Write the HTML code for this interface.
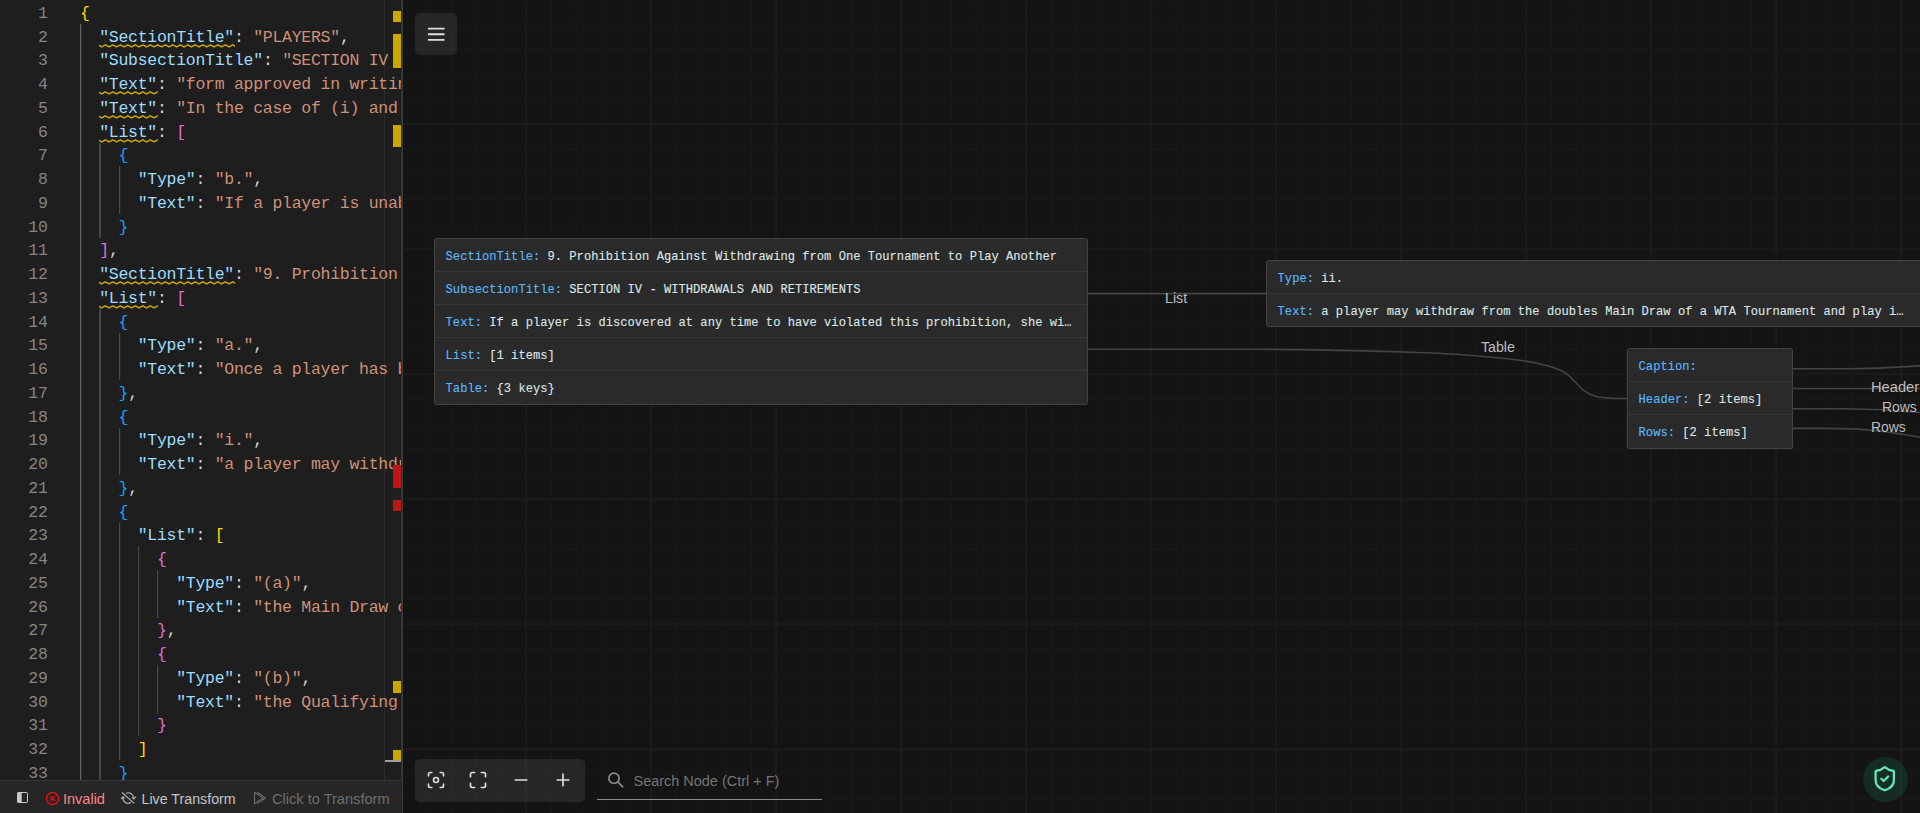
<!DOCTYPE html>
<html><head><meta charset="utf-8"><title>JSON Crack</title>
<style>
html,body{margin:0;padding:0;background:#141414;overflow:hidden}
body{width:1920px;height:813px;position:relative;font-family:"Liberation Sans",sans-serif}
#ed{position:absolute;left:0;top:0;width:402px;height:781px;background:#1e1e1e;overflow:hidden}
.ln,.cl{position:absolute;height:23.75px;line-height:23.75px;font-family:"Liberation Mono",monospace;font-size:16.5px;letter-spacing:-0.277px;white-space:pre;padding-top:2px}
.ln{left:0;width:47.6px;text-align:right;color:#858585}
.cl{left:80px;color:#d4d4d4}
.k{color:#9cdcfe}.s{color:#ce9178}.p{color:#d4d4d4}
.b1{color:#ffd700}.b2{color:#da70d6}.b3{color:#179fff}
.g1,.g2,.g3,.g4,.g5{position:absolute;width:1px}
.g1{background:#646464;box-shadow:1px 0 0 #2c2c2c}.g2{background:#454545;width:2px}.g3{background:#4a4a4a;box-shadow:1px 0 0 #262626}.g4{background:#444;box-shadow:1px 0 0 #242424}.g5{background:#484848;box-shadow:1px 0 0 #282828}
.sqg{position:absolute;overflow:hidden}
#rul{position:absolute;left:384px;top:0;width:1px;height:781px;background:#2b2b2b}
.my,.mr{position:absolute;left:393px;width:8px}
.my{background:#cca700}.mr{background:#bc1616}
#cur{position:absolute;left:385px;top:760px;width:16px;height:2px;background:#a0a0a0}
#sb{position:absolute;left:0;top:780px;width:402px;height:33px;background:#262626;border-top:1px solid #36383e;box-sizing:border-box;font-size:15px;line-height:18px}
#sb span{position:absolute;top:8.9px;white-space:pre}
#sb svg{position:absolute}
#sep{position:absolute;left:402px;top:0;width:1px;height:813px;background:#3a3a3a}
#sep2{position:absolute;left:401px;top:0;width:1px;height:780px;background:#303238}
#gr{position:absolute;left:402px;top:0;width:1518px;height:813px;overflow:hidden;background-color:#141414;
background-image:linear-gradient(#1c1b1b 1.875px,transparent 1.875px),linear-gradient(90deg,#1c1b1b 1.875px,transparent 1.875px),linear-gradient(#191919 1.25px,transparent 1.25px),linear-gradient(90deg,#191919 1.25px,transparent 1.25px);
background-position:-1.875px -1.875px,-1.875px -1.875px,-1.25px -1.25px,-1.25px -1.25px;
background-size:125px 125px,125px 125px,25px 25px,25px 25px}
.node{position:absolute;background:#2a2a2a;border:1px solid #424242;border-radius:2.5px;box-sizing:border-box;font-family:"Liberation Mono",monospace;font-size:12.1px;letter-spacing:0.021px;color:#dce5e7;overflow:hidden}
.row{height:33px;line-height:33px;box-sizing:border-box;border-bottom:1px solid #383838;padding-left:10.6px;white-space:pre;padding-top:2px;-webkit-text-stroke:0.12px}
.row:last-child{border-bottom:none}
.row b{font-weight:normal;color:#59b8ff}
#edges{position:absolute;left:0;top:0}
.el{position:absolute;font-size:14.2px;line-height:16px;color:#bdbdbd;white-space:pre}
.btn{position:absolute;background:rgba(225,228,240,0.085);border-radius:5px}
#tb{left:13px;top:759px;width:170px;height:43px}
#hb{left:13px;top:13px;width:42px;height:42px}
#srch{position:absolute;left:195px;top:798.75px;width:225px;height:1.25px;background:#8c8c8c}
#stx{position:absolute;left:231.5px;top:772px;font-size:14.46px;line-height:18px;color:#747474;white-space:pre}
#shield{position:absolute;left:1461px;top:757px;width:45px;height:45px;border-radius:50%;background:rgba(18,184,134,0.15)}
</style></head><body>
<div id="ed">
<div id="rul"></div>
<div class="g1" style="left:80px;top:23.75px;height:783.75px"></div><div class="g2" style="left:99px;top:142.50px;height:95.00px"></div><div class="g2" style="left:99px;top:308.75px;height:498.75px"></div><div class="g3" style="left:119px;top:166.25px;height:47.50px"></div><div class="g3" style="left:119px;top:332.50px;height:47.50px"></div><div class="g3" style="left:119px;top:427.50px;height:47.50px"></div><div class="g3" style="left:119px;top:522.50px;height:237.50px"></div><div class="g4" style="left:138px;top:546.25px;height:190.00px"></div><div class="g5" style="left:157px;top:570.00px;height:47.50px"></div><div class="g5" style="left:157px;top:665.00px;height:47.50px"></div>
<div class="ln" style="top:-0.01px">1</div>
<div class="cl" style="top:-0.01px"><span class="b1">{</span></div>
<div class="ln" style="top:23.74px">2</div>
<div class="cl" style="top:23.74px">  <span class="k sq">"SectionTitle"</span><span class="p">: </span><span class="s">"PLAYERS"</span><span class="p">,</span></div>
<div class="ln" style="top:47.49px">3</div>
<div class="cl" style="top:47.49px">  <span class="k">"SubsectionTitle"</span><span class="p">: </span><span class="s">"SECTION IV - WITHDRAWALS AND RETIREMENTS",</span></div>
<div class="ln" style="top:71.24px">4</div>
<div class="cl" style="top:71.24px">  <span class="k sq">"Text"</span><span class="p">: </span><span class="s">"form approved in writing by the WTA</span></div>
<div class="ln" style="top:94.99px">5</div>
<div class="cl" style="top:94.99px">  <span class="k sq">"Text"</span><span class="p">: </span><span class="s">"In the case of (i) and (ii) above</span></div>
<div class="ln" style="top:118.74px">6</div>
<div class="cl" style="top:118.74px">  <span class="k sq">"List"</span><span class="p">: </span><span class="b2">[</span></div>
<div class="ln" style="top:142.49px">7</div>
<div class="cl" style="top:142.49px">    <span class="b3">{</span></div>
<div class="ln" style="top:166.24px">8</div>
<div class="cl" style="top:166.24px">      <span class="k">"Type"</span><span class="p">: </span><span class="s">"b."</span><span class="p">,</span></div>
<div class="ln" style="top:189.99px">9</div>
<div class="cl" style="top:189.99px">      <span class="k">"Text"</span><span class="p">: </span><span class="s">"If a player is unable to</span></div>
<div class="ln" style="top:213.74px">10</div>
<div class="cl" style="top:213.74px">    <span class="b3">}</span></div>
<div class="ln" style="top:237.49px">11</div>
<div class="cl" style="top:237.49px">  <span class="b2">]</span><span class="p">,</span></div>
<div class="ln" style="top:261.24px">12</div>
<div class="cl" style="top:261.24px">  <span class="k sq">"SectionTitle"</span><span class="p">: </span><span class="s">"9. Prohibition Against</span></div>
<div class="ln" style="top:284.99px">13</div>
<div class="cl" style="top:284.99px">  <span class="k sq">"List"</span><span class="p">: </span><span class="b2">[</span></div>
<div class="ln" style="top:308.74px">14</div>
<div class="cl" style="top:308.74px">    <span class="b3">{</span></div>
<div class="ln" style="top:332.49px">15</div>
<div class="cl" style="top:332.49px">      <span class="k">"Type"</span><span class="p">: </span><span class="s">"a."</span><span class="p">,</span></div>
<div class="ln" style="top:356.24px">16</div>
<div class="cl" style="top:356.24px">      <span class="k">"Text"</span><span class="p">: </span><span class="s">"Once a player has been</span></div>
<div class="ln" style="top:379.99px">17</div>
<div class="cl" style="top:379.99px">    <span class="b3">}</span><span class="p">,</span></div>
<div class="ln" style="top:403.74px">18</div>
<div class="cl" style="top:403.74px">    <span class="b3">{</span></div>
<div class="ln" style="top:427.49px">19</div>
<div class="cl" style="top:427.49px">      <span class="k">"Type"</span><span class="p">: </span><span class="s">"i."</span><span class="p">,</span></div>
<div class="ln" style="top:451.24px">20</div>
<div class="cl" style="top:451.24px">      <span class="k">"Text"</span><span class="p">: </span><span class="s">"a player may withdraw</span></div>
<div class="ln" style="top:474.99px">21</div>
<div class="cl" style="top:474.99px">    <span class="b3">}</span><span class="p">,</span></div>
<div class="ln" style="top:498.74px">22</div>
<div class="cl" style="top:498.74px">    <span class="b3">{</span></div>
<div class="ln" style="top:522.49px">23</div>
<div class="cl" style="top:522.49px">      <span class="k">"List"</span><span class="p">: </span><span class="b1">[</span></div>
<div class="ln" style="top:546.24px">24</div>
<div class="cl" style="top:546.24px">        <span class="b2">{</span></div>
<div class="ln" style="top:569.99px">25</div>
<div class="cl" style="top:569.99px">          <span class="k">"Type"</span><span class="p">: </span><span class="s">"(a)"</span><span class="p">,</span></div>
<div class="ln" style="top:593.74px">26</div>
<div class="cl" style="top:593.74px">          <span class="k">"Text"</span><span class="p">: </span><span class="s">"the Main Draw of a</span></div>
<div class="ln" style="top:617.49px">27</div>
<div class="cl" style="top:617.49px">        <span class="b2">}</span><span class="p">,</span></div>
<div class="ln" style="top:641.24px">28</div>
<div class="cl" style="top:641.24px">        <span class="b2">{</span></div>
<div class="ln" style="top:664.99px">29</div>
<div class="cl" style="top:664.99px">          <span class="k">"Type"</span><span class="p">: </span><span class="s">"(b)"</span><span class="p">,</span></div>
<div class="ln" style="top:688.74px">30</div>
<div class="cl" style="top:688.74px">          <span class="k">"Text"</span><span class="p">: </span><span class="s">"the Qualifying of</span></div>
<div class="ln" style="top:712.49px">31</div>
<div class="cl" style="top:712.49px">        <span class="b2">}</span></div>
<div class="ln" style="top:736.24px">32</div>
<div class="cl" style="top:736.24px">      <span class="b1">]</span></div>
<div class="ln" style="top:759.99px">33</div>
<div class="cl" style="top:759.99px">    <span class="b3">}</span></div>
<svg class="sqg" style="left:99.25px;top:43.75px;width:135.95px;height:3.75px" viewBox="99.25 43.75 135.95 3.75"><path d="M98.05 44.55 L101.80 46.70 L105.55 44.55 L109.30 46.70 L113.05 44.55 L116.80 46.70 L120.55 44.55 L124.30 46.70 L128.05 44.55 L131.80 46.70 L135.55 44.55 L139.30 46.70 L143.05 44.55 L146.80 46.70 L150.55 44.55 L154.30 46.70 L158.05 44.55 L161.80 46.70 L165.55 44.55 L169.30 46.70 L173.05 44.55 L176.80 46.70 L180.55 44.55 L184.30 46.70 L188.05 44.55 L191.80 46.70 L195.55 44.55 L199.30 46.70 L203.05 44.55 L206.80 46.70 L210.55 44.55 L214.30 46.70 L218.05 44.55 L221.80 46.70 L225.55 44.55 L229.30 46.70 L233.05 44.55 L236.80 46.70 L240.55 44.55" fill="none" stroke="#cca700" stroke-width="1.5" stroke-linejoin="round"/></svg><svg class="sqg" style="left:99.25px;top:91.25px;width:58.95px;height:3.75px" viewBox="99.25 91.25 58.95 3.75"><path d="M98.05 92.05 L101.80 94.20 L105.55 92.05 L109.30 94.20 L113.05 92.05 L116.80 94.20 L120.55 92.05 L124.30 94.20 L128.05 92.05 L131.80 94.20 L135.55 92.05 L139.30 94.20 L143.05 92.05 L146.80 94.20 L150.55 92.05 L154.30 94.20 L158.05 92.05 L161.80 94.20 L165.55 92.05" fill="none" stroke="#cca700" stroke-width="1.5" stroke-linejoin="round"/></svg><svg class="sqg" style="left:99.25px;top:115.00px;width:58.95px;height:3.75px" viewBox="99.25 115.00 58.95 3.75"><path d="M98.05 115.80 L101.80 117.95 L105.55 115.80 L109.30 117.95 L113.05 115.80 L116.80 117.95 L120.55 115.80 L124.30 117.95 L128.05 115.80 L131.80 117.95 L135.55 115.80 L139.30 117.95 L143.05 115.80 L146.80 117.95 L150.55 115.80 L154.30 117.95 L158.05 115.80 L161.80 117.95 L165.55 115.80" fill="none" stroke="#cca700" stroke-width="1.5" stroke-linejoin="round"/></svg><svg class="sqg" style="left:99.25px;top:138.75px;width:58.95px;height:3.75px" viewBox="99.25 138.75 58.95 3.75"><path d="M98.05 139.55 L101.80 141.70 L105.55 139.55 L109.30 141.70 L113.05 139.55 L116.80 141.70 L120.55 139.55 L124.30 141.70 L128.05 139.55 L131.80 141.70 L135.55 139.55 L139.30 141.70 L143.05 139.55 L146.80 141.70 L150.55 139.55 L154.30 141.70 L158.05 139.55 L161.80 141.70 L165.55 139.55" fill="none" stroke="#cca700" stroke-width="1.5" stroke-linejoin="round"/></svg><svg class="sqg" style="left:99.25px;top:281.25px;width:135.95px;height:3.75px" viewBox="99.25 281.25 135.95 3.75"><path d="M98.05 282.05 L101.80 284.20 L105.55 282.05 L109.30 284.20 L113.05 282.05 L116.80 284.20 L120.55 282.05 L124.30 284.20 L128.05 282.05 L131.80 284.20 L135.55 282.05 L139.30 284.20 L143.05 282.05 L146.80 284.20 L150.55 282.05 L154.30 284.20 L158.05 282.05 L161.80 284.20 L165.55 282.05 L169.30 284.20 L173.05 282.05 L176.80 284.20 L180.55 282.05 L184.30 284.20 L188.05 282.05 L191.80 284.20 L195.55 282.05 L199.30 284.20 L203.05 282.05 L206.80 284.20 L210.55 282.05 L214.30 284.20 L218.05 282.05 L221.80 284.20 L225.55 282.05 L229.30 284.20 L233.05 282.05 L236.80 284.20 L240.55 282.05" fill="none" stroke="#cca700" stroke-width="1.5" stroke-linejoin="round"/></svg><svg class="sqg" style="left:99.25px;top:305.00px;width:58.95px;height:3.75px" viewBox="99.25 305.00 58.95 3.75"><path d="M98.05 305.80 L101.80 307.95 L105.55 305.80 L109.30 307.95 L113.05 305.80 L116.80 307.95 L120.55 305.80 L124.30 307.95 L128.05 305.80 L131.80 307.95 L135.55 305.80 L139.30 307.95 L143.05 305.80 L146.80 307.95 L150.55 305.80 L154.30 307.95 L158.05 305.80 L161.80 307.95 L165.55 305.80" fill="none" stroke="#cca700" stroke-width="1.5" stroke-linejoin="round"/></svg>
<div class="my" style="top:11px;height:11px"></div><div class="my" style="top:34px;height:34px"></div><div class="my" style="top:125px;height:22px"></div><div class="mr" style="top:465px;height:23px"></div><div class="mr" style="top:500px;height:11px"></div><div class="my" style="top:681px;height:12px"></div><div class="my" style="top:750px;height:10px"></div>
<div id="cur"></div>
</div>
<div id="sb">
<svg style="left:17px;top:11px" width="11" height="11" viewBox="0 0 11 11"><rect x="0.5" y="0.5" width="10" height="10" rx="0.8" fill="none" stroke="#c9c9cd" stroke-width="1"/><rect x="0.5" y="0.5" width="4.2" height="10" fill="#c9c9cd"/></svg>
<svg style="left:45px;top:10px" width="15" height="15" viewBox="0 0 15 15"><circle cx="7.5" cy="7.5" r="6.1" fill="none" stroke="#f20d0d" stroke-width="1.3"/><path d="M5.2 5.2l4.6 4.6M9.8 5.2l-4.6 4.6" stroke="#f20d0d" stroke-width="1.3" fill="none"/></svg>
<span style="left:63px;color:#ff8787;font-size:14.5px">Invalid</span>
<svg style="left:118px;top:6.6px" width="20" height="20" viewBox="0 0 20 20" fill="none" stroke="#b8b8ba" stroke-width="1.1"><path d="M8.1 5.3A5.2 5.2 0 0 1 15.5 9.6"/><path d="M14.2 9.5L15.8 10.9L17.8 8.7"/><path d="M5 9.3A5.2 5.2 0 0 0 12.9 14.5"/><path d="M3.2 10.9L5 8.8L6.6 10.3"/><path d="M4.1 4.5L16.1 15.4"/></svg>
<span style="left:141.5px;color:#c4c4c6;font-size:14.25px">Live Transform</span>
<svg style="left:250px;top:6.6px" width="20" height="20" viewBox="0 0 20 20" fill="none" stroke="#6e6e6e" stroke-width="1.05" stroke-linejoin="miter"><path d="M4.5 4.3L13.2 9.9L4.5 15.5z"/><path d="M7.3 4.2L15.5 9.9L7.3 15.6"/></svg>
<span style="left:272px;color:#6e6e6e;font-size:14.6px">Click to Transform</span>
</div>
<div id="gr">
<svg id="edges" width="1518" height="813" viewBox="402 0 1518 813" fill="none" stroke="#444444" stroke-width="1.6">
<path d="M1088 293.6H1267"/>
<path d="M1088.0 349.2 C1115.8 349.2 1212.6 349.1 1255.0 349.3 C1297.4 349.5 1318.2 350.0 1342.5 350.4 C1366.8 350.8 1381.3 351.2 1400.8 351.9 C1420.2 352.6 1439.8 353.1 1459.2 354.5 C1478.7 355.9 1502.9 358.1 1517.5 360.0 C1532.1 361.9 1538.9 363.6 1546.7 365.6 C1554.5 367.7 1559.4 369.5 1564.2 372.3 C1569.0 375.1 1572.4 379.3 1575.8 382.5 C1579.2 385.7 1581.2 388.9 1584.6 391.2 C1588.0 393.6 1591.3 395.3 1596.2 396.5 C1601.1 397.7 1608.4 398.1 1613.7 398.4 C1619.0 398.7 1625.6 398.5 1628.0 398.5"/>
<path d="M1793 368.8H1845C1875 368.8 1895 367.4 1921 365.7"/>
<path d="M1793 388.5H1920"/>
<path d="M1793 408.8H1845C1875 408.8 1895 410 1921 412.6"/>
<path d="M1793 428.4H1825C1865 428.4 1890 431.5 1921 437.5"/>
</svg>
<div class="node" style="left:32px;top:238px;width:654px;height:167px">
<div class="row"><b>SectionTitle:</b> 9. Prohibition Against Withdrawing from One Tournament to Play Another</div>
<div class="row"><b>SubsectionTitle:</b> SECTION IV - WITHDRAWALS AND RETIREMENTS</div>
<div class="row"><b>Text:</b> If a player is discovered at any time to have violated this prohibition, she wi…</div>
<div class="row"><b>List:</b> [1 items]</div>
<div class="row"><b>Table:</b> {3 keys}</div>
</div>
<div class="node" style="left:864px;top:260px;width:700px;height:67px">
<div class="row"><b>Type:</b> ii.</div>
<div class="row"><b>Text:</b> a player may withdraw from the doubles Main Draw of a WTA Tournament and play i…</div>
</div>
<div class="node" style="left:1225px;top:348px;width:166px;height:101px">
<div class="row"><b>Caption:</b> </div>
<div class="row"><b>Header:</b> [2 items]</div>
<div class="row"><b>Rows:</b> [2 items]</div>
</div>
<div class="el" style="left:763px;top:290px">List</div>
<div class="el" style="left:1079px;top:339px">Table</div>
<div class="el" style="left:1469px;top:379px;font-size:14.7px">Header</div>
<div class="el" style="left:1480px;top:399px;font-size:13.9px">Rows</div>
<div class="el" style="left:1469px;top:419px;font-size:13.9px">Rows</div>
<div class="btn" id="hb"><svg style="position:absolute;left:10.15px;top:10.05px" width="22.5" height="22.5" viewBox="0 0 24 24" fill="none" stroke="#e0e0e3" stroke-width="2" stroke-linecap="round"><path d="M4 6h16M4 12h16M4 18h16"/></svg></div>
<div class="btn" id="tb">
<svg style="position:absolute;left:11px;top:11px" width="20" height="20" viewBox="0 0 24 24" fill="none" stroke="#dedee0" stroke-width="2" stroke-linecap="round" stroke-linejoin="round"><circle cx="12" cy="12" r="3"/><path d="M3 7V5a2 2 0 0 1 2-2h2"/><path d="M17 3h2a2 2 0 0 1 2 2v2"/><path d="M21 17v2a2 2 0 0 1-2 2h-2"/><path d="M7 21H5a2 2 0 0 1-2-2v-2"/></svg>
<svg style="position:absolute;left:53px;top:11px" width="20" height="20" viewBox="0 0 24 24" fill="none" stroke="#dedee0" stroke-width="2" stroke-linecap="round" stroke-linejoin="round"><path d="M8 3H5a2 2 0 0 0-2 2v3"/><path d="M21 8V5a2 2 0 0 0-2-2h-3"/><path d="M3 16v3a2 2 0 0 0 2 2h3"/><path d="M16 21h3a2 2 0 0 0 2-2v-3"/></svg>
<svg style="position:absolute;left:96px;top:11px" width="20" height="20" viewBox="0 0 24 24" fill="none" stroke="#dedee0" stroke-width="2" stroke-linecap="round"><path d="M5 12h14"/></svg>
<svg style="position:absolute;left:138px;top:11px" width="20" height="20" viewBox="0 0 24 24" fill="none" stroke="#dedee0" stroke-width="2" stroke-linecap="round"><path d="M5 12h14M12 5v14"/></svg>
</div>
<svg style="position:absolute;left:205px;top:771px" width="18" height="18" viewBox="0 0 18 18" fill="none" stroke="#8a8a8a" stroke-width="1.7"><circle cx="7" cy="7.2" r="5.1"/><path d="M10.7 10.9l5.5 5.5"/></svg>
<div id="stx">Search Node (Ctrl + F)</div>
<div id="srch"></div>
<div id="shield"><svg style="position:absolute;left:8.3px;top:7.8px" width="27.5" height="27.5" viewBox="0 0 24 24" fill="none" stroke="#63e6be" stroke-width="2" stroke-linecap="round" stroke-linejoin="round"><path d="M20 13c0 5-3.5 7.5-7.66 8.95a1 1 0 0 1-.67-.01C7.5 20.5 4 18 4 13V6a1 1 0 0 1 1-1c2 0 4.5-1.2 6.24-2.72a1.17 1.17 0 0 1 1.52 0C14.51 3.81 17 5 19 5a1 1 0 0 1 1 1z"/><path d="m9 12 2 2 4-4"/></svg></div>
</div>
<div id="sep"></div><div id="sep2"></div>
</body></html>
